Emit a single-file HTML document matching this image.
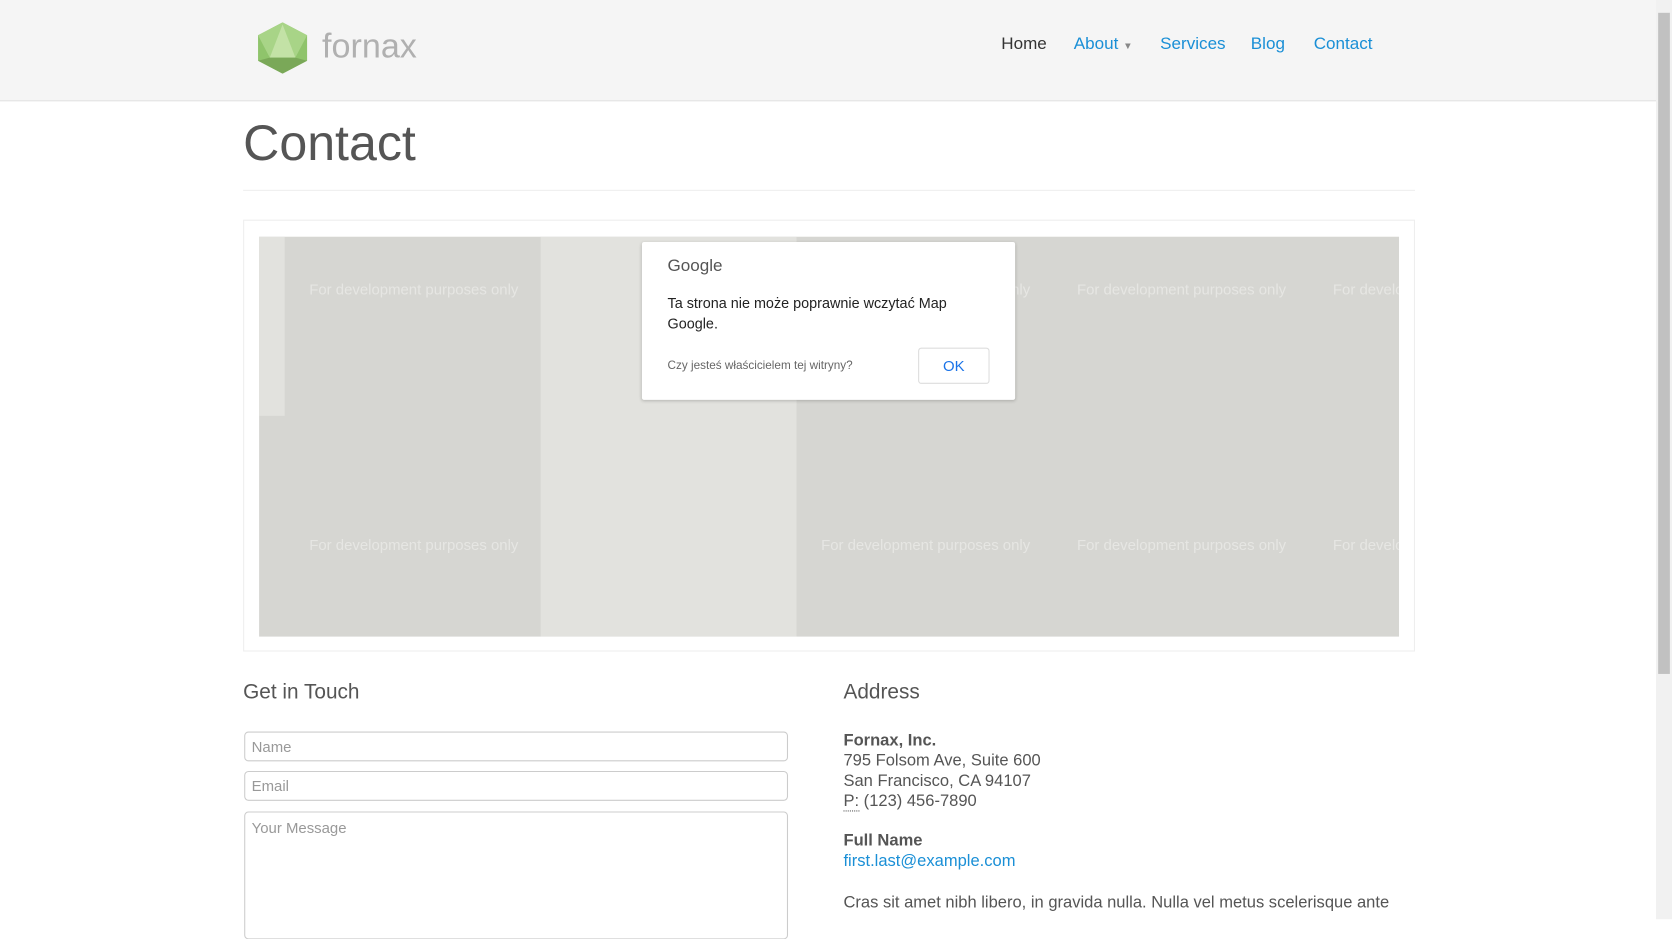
<!DOCTYPE html>
<html><head><meta charset="utf-8"><style>
*{box-sizing:border-box}
html,body{margin:0;width:1672px;height:919px;overflow:hidden}
body{font-family:"Liberation Sans",sans-serif;background:#fff;color:#555}
#w{position:absolute;left:0;top:0;width:1568px;height:862px;transform:scale(1.06633);transform-origin:0 0}
.nav{position:absolute;left:0;top:0;width:1553px;height:95px;background:#f5f5f5;border-bottom:1px solid #e3e3e3}
.nav a{position:absolute;top:33px;font-size:16px;color:#1a8fd6;text-decoration:none}
h1{position:absolute;left:228px;top:106px;margin:0;font-size:47px;font-weight:400;color:#555}
.hr{position:absolute;left:228px;top:178px;width:1099px;border-top:1px solid #eee}
.mapbox{position:absolute;left:228px;top:206px;width:1099px;height:405px;border:1px solid #eee}
.map{position:absolute;left:243px;top:222px;width:1069px;height:375px;background:#d6d6d2;overflow:hidden}
.wm{position:absolute;color:#e6e6e3;font-size:14px;white-space:nowrap}
.dlg{position:absolute;left:602px;top:227px;width:350px;height:148px;background:#fff;border-radius:2px;box-shadow:0 1px 3px rgba(0,0,0,.2)}
h3{position:absolute;margin:0;font-size:19.5px;font-weight:400;color:#555}
.in{position:absolute;left:229px;width:510px;border:1px solid #ccc;border-radius:4px;font-size:14px;color:#999;padding:6px 6px}
.t{position:absolute;left:791px;font-size:15.5px;line-height:19px;color:#555}
.sb{position:absolute;left:1553px;top:0;width:15px;height:862px;background:#f1f1f1}
</style></head><body><div id="w">
<div class="nav">
<svg style="position:absolute;left:239px;top:20px" width="52" height="50" viewBox="0 0 52 50">
<polygon points="26,1 49,13 49,37 26,49 3,37 3,13" fill="#8fc46b"/>
<polygon points="26,1 49,13 38,34 14,34 3,13" fill="#a8d487"/>
<polygon points="26,3 38,34 14,34" fill="#c3e2a6"/>
<polygon points="14,34 38,34 49,37 26,49 3,37" fill="#7aa858"/>
</svg>
<div style="position:absolute;left:302px;top:25px;font-size:32px;color:#b0b0b0">fornax</div>
<a style="left:939px;color:#333">Home</a>
<a style="left:1007px">About <span style="font-size:9px;color:#888">▼</span></a>
<a style="left:1088px">Services</a>
<a style="left:1173px">Blog</a>
<a style="left:1232px">Contact</a>
</div>
<h1>Contact</h1>
<div class="hr"></div>
<div class="mapbox"></div>
<div class="map">
<div style="position:absolute;left:0;top:0;width:24px;height:168px;background:#e2e2de"></div>
<div style="position:absolute;left:264px;top:0;width:240px;height:375px;background:#e2e2de"></div>
<div class="wm" style="left:47px;top:41px">For development purposes only</div>
<div class="wm" style="left:47px;top:281px">For development purposes only</div>
<div class="wm" style="left:527px;top:41px">For development purposes only</div>
<div class="wm" style="left:767px;top:41px">For development purposes only</div>
<div class="wm" style="left:1007px;top:41px">For development purposes only</div>
<div class="wm" style="left:527px;top:281px">For development purposes only</div>
<div class="wm" style="left:767px;top:281px">For development purposes only</div>
<div class="wm" style="left:1007px;top:281px">For development purposes only</div>
</div>
<div class="dlg">
<div style="position:absolute;left:24px;top:14px;font-size:16px;color:#555">Google</div>
<div style="position:absolute;left:24px;top:48px;font-size:13.5px;line-height:19px;color:#222;width:300px">Ta strona nie może poprawnie wczytać Map Google.</div>
<div style="position:absolute;left:24px;top:110px;font-size:11px;color:#666">Czy jesteś właścicielem tej witryny?</div>
<div style="position:absolute;left:259px;top:99px;width:67px;height:34px;border:1px solid #ddd;border-radius:3px;color:#1a73e8;font-size:14px;text-align:center;line-height:32px">OK</div>
</div>
<h3 style="left:228px;top:638px">Get in Touch</h3>
<h3 style="left:791px;top:638px">Address</h3>
<div class="in" style="top:686px;height:28px;padding-top:5px">Name</div>
<div class="in" style="top:723px;height:28px;padding-top:5px">Email</div>
<div class="in" style="top:761px;height:120px;padding-top:6px">Your Message</div>
<div class="t" style="top:685px"><b>Fornax, Inc.</b><br>795 Folsom Ave, Suite 600<br>San Francisco, CA 94107<br><span style="border-bottom:1px dotted #555">P:</span> (123) 456-7890</div>
<div class="t" style="top:779px"><b>Full Name</b><br><span style="color:#1a8fd6">first.last@example.com</span></div>
<div class="t" style="top:837px">Cras sit amet nibh libero, in gravida nulla. Nulla vel metus scelerisque ante</div>
<div class="sb"><div style="position:absolute;left:2px;top:12px;width:11px;height:620px;background:#c1c1c1"></div></div>
</div></body></html>
